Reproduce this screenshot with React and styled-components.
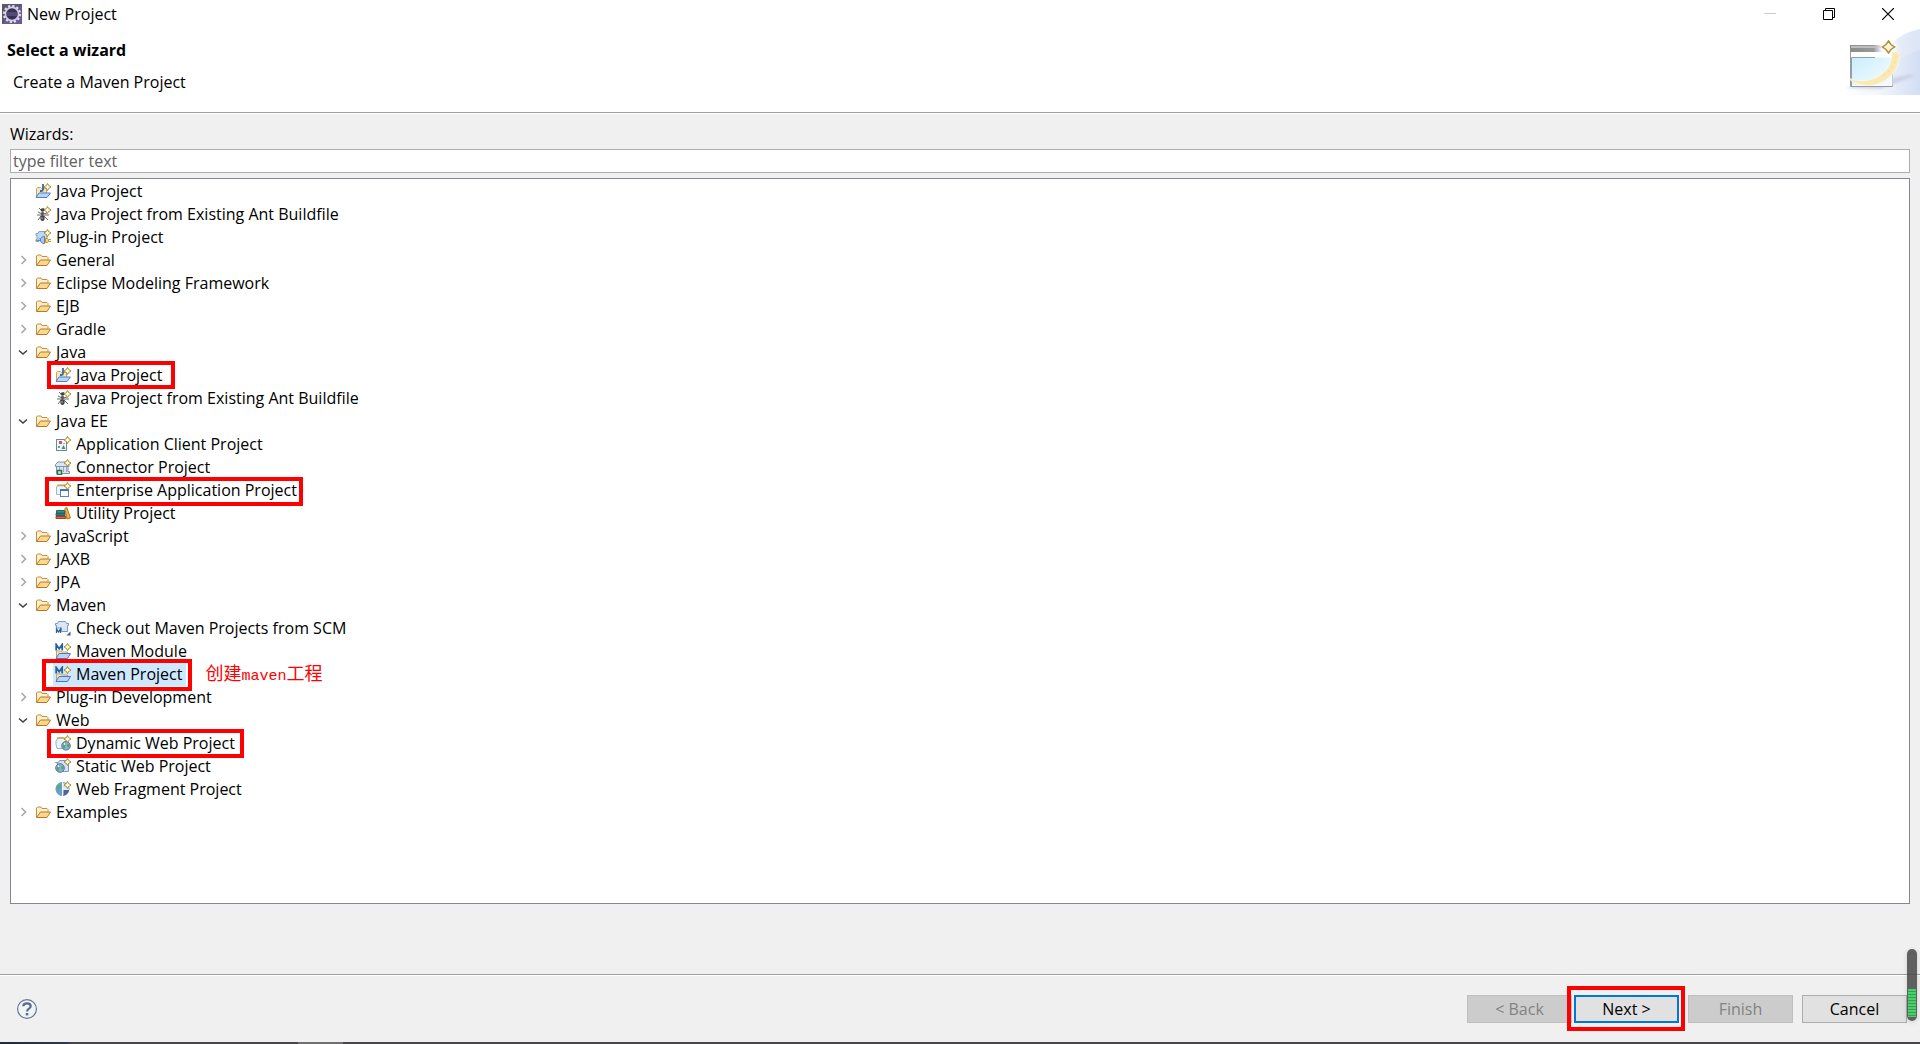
import React, { useState } from "react";
import styled, { createGlobalStyle } from "styled-components";

const GlobalStyle = createGlobalStyle`
  *, *::before, *::after { box-sizing: border-box; }
  body { margin: 0; background: #f0f0f0; }
  body, button, input {
    font-family: "Open Sans", "Noto Sans", "Noto Sans CJK SC", sans-serif;
    font-size: 16px;
    line-height: 20px;
    color: #000;
  }
  h1, p, ul { margin: 0; padding: 0; }
  button { padding: 0; }
`;

/* ---------- layout ---------- */

const Window = styled.div`
  min-height: 100vh;
  display: flex;
  flex-direction: column;
`;

const TitleBar = styled.header`
  display: flex;
  align-items: center;
  height: 28px;
  padding: 0 3px 0 2px;
  background: #fff;
`;

const WindowTitle = styled.span`
  flex: 1;
  padding-left: 5px;
`;

const CaptionButton = styled.button`
  display: grid;
  place-items: center;
  width: 59px;
  height: 28px;
  border: 0;
  background: none;
`;

const Banner = styled.section`
  display: flex;
  justify-content: space-between;
  height: 85px;
  padding-top: 1px;
  background: #fff;
  border-bottom: 1px solid #a0a0a0;
`;

const BannerText = styled.div`
  display: grid;
  gap: 12px;
  align-content: start;
  padding: 11px 7px;
`;

const Heading = styled.h1`
  font-size: 16px;
  line-height: 20px;
  font-weight: 700;
`;

const Description = styled.p`
  padding-left: 6px;
`;

const Body = styled.main`
  flex: 1;
  display: flex;
  flex-direction: column;
  border-top: 1px solid #fff;
  padding: 10px 10px 70px;
`;

const FilterLabel = styled.label`
  margin-bottom: 5px;
`;

const FilterInput = styled.input`
  width: 100%;
  height: 24px;
  padding: 0 2px;
  border: 1px solid #abadb3;
  background: #fff;
  &::placeholder { color: #606060; opacity: 1; }
`;

const TreePanel = styled.div`
  flex: 1;
  margin-top: 5px;
  padding: 1px 0;
  border: 1px solid #828790;
  background: #fff;
`;

const TreeList = styled.ul`
  list-style: none;
`;

const Row = styled.div`
  display: flex;
  align-items: center;
  height: 23px;
  padding-left: ${(p) => 3 + p.$level * 20}px;
`;

const Toggle = styled.button`
  display: grid;
  place-items: center;
  width: 18px;
  height: 23px;
  padding: 0 1px 1px 0;
  border: 0;
  background: none;
`;

const ToggleSpace = styled.span`
  width: 18px;
`;

const Item = styled.button`
  position: relative;
  display: flex;
  align-items: center;
  gap: 5px;
  height: 23px;
  margin-left: 1px;
  padding: 0 4px 2px 2px;
  border: 0;
  white-space: nowrap;
  background: ${(p) => (p.$selected ? "#cde8ff" : "none")};
`;

const Mark = styled.span`
  position: absolute;
  z-index: 1;
  inset: ${(p) => p.$inset};
  border: 4px solid #ff0000;
  pointer-events: none;
`;

const Note = styled.span`
  margin-left: 19px;
  font-family: "Noto Sans CJK SC", sans-serif;
  font-size: 18px;
  font-weight: 400;
  line-height: 23px;
  color: #ff0000;
`;

const NoteLatin = styled.span`
  font-family: "Liberation Mono", monospace;
  font-size: 15px;
`;

const Footer = styled.footer`
  display: flex;
  align-items: center;
  justify-content: space-between;
  height: 68px;
  padding: 0 13px 0 17px;
  border-top: 1px solid #a0a0a0;
  box-shadow: inset 0 1px 0 #fff;
`;

const HelpButton = styled.button`
  display: grid;
  border: 0;
  background: none;
`;

const ButtonBar = styled.div`
  display: flex;
  gap: 9px;
`;

const ButtonPair = styled.div`
  display: flex;
  gap: 2px;
`;

const PushButton = styled.button`
  position: relative;
  width: 105px;
  height: 28px;
  border: ${(p) => (p.$primary ? "2px solid #0078d7" : "1px solid #adadad")};
  background: #e1e1e1;
  &:disabled {
    border-color: #bfbfbf;
    background: #cccccc;
    color: #838383;
  }
`;

const Meter = styled.div`
  position: fixed;
  z-index: 2;
  right: 3px;
  bottom: 23px;
  width: 10px;
  height: 72px;
  padding: 40px 1px 4px;
  border-radius: 5px;
  background: rgba(64, 64, 64, 0.82);
  box-shadow: 0 1px 5px rgba(0, 0, 0, 0.14);
`;

const MeterFill = styled.div`
  height: 28px;
  background: repeating-linear-gradient(#3fd667 0 2px, #4b8f5c 2px 3px);
`;

const TaskbarEdge = styled.div`
  height: 2px;
  background: linear-gradient(
    90deg,
    #1b2b40 0, #2b3b4f 66px, #484648 72px, #484648 298px,
    #707070 298px, #707070 343px, #484648 343px
  );
`;

/* ---------- drawings ---------- */

const Svg16 = ({ children }) => (
  <svg width="16" height="16" viewBox="0 0 16 16" aria-hidden="true">{children}</svg>
);

const Sparkle = () => (
  <g>
    <path d="M12.500 .500 13.800 2.700 16 4 13.800 5.300 12.500 7.500 11.200 5.300 9 4 11.200 2.700Z" fill="#fff3b5" stroke="#a8842a" />
    <path d="M12.500 2v4M10.500 4h4" stroke="#fffbe8" />
  </g>
);

const FolderIcon = () => (
  <Svg16>
    <path d="M1.500 13V4l1-1h3.500l1 1.500h5l1 1v2" fill="#fdf0cd" stroke="#c68d3f" />
    <path d="M1.500 13.500 5.500 8h10L12 13.500Z" fill="#fcd98a" stroke="#b87729" strokeLinejoin="round" />
  </Svg16>
);

const JavaIcon = () => (
  <Svg16>
    <path d="M1.500 14V5.500l1-1h3l1 1h5v5" fill="#f8e6b9" stroke="#c0a468" />
    <path d="M1 14.500 4 10h11.500L12 14.500Z" fill="#b5d6f8" stroke="#5580c4" strokeLinejoin="round" />
    <path d="M8 1v5.500Q8 8 6.500 8H5" fill="none" stroke="#376b9d" strokeWidth="1.800" />
    <Sparkle />
  </Svg16>
);

const AntIcon = () => (
  <Svg16>
    <path d="M4 2l2 2M3 6l4 2M2 9h5M3 14l3-4M13 14l-4-4M14 9H9M8 8l4-1M9 2 8 4" fill="none" stroke="#6a6a6a" />
    <ellipse cx="7.500" cy="4" rx="2" ry="1.800" fill="#454545" />
    <ellipse cx="7.500" cy="7.500" rx="1.600" ry="1.800" fill="#5a5a5a" />
    <ellipse cx="7.500" cy="12" rx="2.200" ry="3" fill="#484848" />
    <path d="M7 11v2" stroke="#aaa" />
    <Sparkle />
  </Svg16>
);

const PluginIcon = () => (
  <Svg16>
    <path d="M1 4.500h2l1-2h7l1 2v6h-2v-1H4v3H1v-2h1v-4H1Z" fill="#bcd9f4" stroke="#86a3c7" />
    <path d="M9.500 7.500H8L5.500 9.500v3L8 14.500h1.500Z" fill="#a9c7ee" stroke="#5c82b7" />
    <path d="M1 11.500h4" stroke="#6c8cba" />
    <path d="M10.500 9.500h2l1 1v2l-1 1h-2Z" fill="#fbd75d" stroke="#c5912b" />
    <path d="M14 10.500h2M14 12.500h2" stroke="#c5912b" />
    <Sparkle />
  </Svg16>
);

const AppClientIcon = () => (
  <Svg16>
    <rect x="1.500" y="3.500" width="10" height="11" fill="#f3f8fd" stroke="#6687b4" />
    <path d="M4 5h3v3H4z" fill="#d65263" />
    <path d="m6.500 13 2-4 2 4Z" fill="#3c9b5b" />
    <path d="M3 10h2v2H3z" fill="#6ea06c" />
    <path d="M8 7h2v1H8z" fill="#e38592" />
    <Sparkle />
  </Svg16>
);

const ConnectorIcon = () => (
  <Svg16>
    <path d="M.500 5.500 3 3h8l3 2.500v2h-1v5h1.500v2H1.500v-7h-1Z" fill="#dce4f1" stroke="#8092ae" />
    <path d="M1 7.500h12" stroke="#8092ae" />
    <path d="M4.500 8v3M8.500 8v5M11.500 8v5" stroke="#9aa7bd" />
    <path d="M2.500 11.500h4v4h-4z" fill="#cfeccc" stroke="#257a49" strokeWidth="1.500" />
    <Sparkle />
  </Svg16>
);

const EnterpriseIcon = () => (
  <Svg16>
    <path d="M1.500 12.500V5L3 3h9v9.500Z" fill="#eef5fd" stroke="#9db5d8" />
    <path d="M2 3.500h8" stroke="#d4a94a" strokeWidth="1.600" />
    <rect x="5.500" y="7.500" width="8" height="7" fill="#f7fbff" stroke="#5d84bb" />
    <path d="M5 8h9" stroke="#4673ad" strokeWidth="2" />
    <Sparkle />
  </Svg16>
);

const UtilityIcon = () => (
  <Svg16>
    <path d="M1.500 5.500h8v2.500h-8z" fill="#2f9b72" stroke="#216b59" />
    <path d="M1 8.500h9v2H1z" fill="#2f7f93" stroke="#2b5c6e" />
    <path d="M1 11.500h10v2H1z" fill="#e2653c" stroke="#a5431f" />
    <path d="m9.800 3.500 2-1 3.700 10.500-3.500 1Z" fill="#efb04e" stroke="#b3741f" />
  </Svg16>
);

const MavenLetter = ({ x, y, size, weight }) => (
  <path
    d={`M${x} ${y + size}v-${size}l${size / 2} ${size * 0.7} ${size / 2}-${size * 0.7}v${size}`}
    fill="none"
    stroke="#28629e"
    strokeWidth={weight}
  />
);

const ScmIcon = () => (
  <Svg16>
    <path d="M.500 3.500h2l1-2h7l1 2h2v2h-1v6h-6V8H1.500V5.500h-1Z" fill="#d9e6f6" stroke="#8197ba" />
    <MavenLetter x={1.5} y={9} size={4} weight={1.3} />
    <path d="M15.500 11.500v4h-4Z" fill="#28629e" />
  </Svg16>
);

const MavenIcon = () => (
  <Svg16>
    <path d="M1.500 15V8h4l1 1h6v2" fill="#f8e6b9" stroke="#c0a468" />
    <path d="M1 15.500 4 10.500h11.500L12.500 15.500Z" fill="#b5d6f8" stroke="#4c78bd" strokeLinejoin="round" />
    <MavenLetter x={1.2} y={1.5} size={6} weight={1.8} />
    <Sparkle />
  </Svg16>
);

const Globe = ({ x, y }) => (
  <g transform={`translate(${x} ${y})`}>
    <circle r="4.300" fill="#7db4e4" stroke="#5275a5" />
    <path d="M-3-2q2-2 3 0 0 2-1 2 1 2-1 3-2-2-1-5ZM1-1l2-1 1 2-2 2Z" fill="#63a04f" />
    <circle cx="-1.500" cy="-1.800" r="1" fill="#e7f5ff" />
  </g>
);

const DynamicWebIcon = () => (
  <Svg16>
    <path d="M1 6 3 3h8v10.500H2Q.500 9 1 6Z" fill="#e9f1fb" stroke="#9aafd0" />
    <path d="M2 3h7" stroke="#d4a94a" strokeWidth="1.600" />
    <Globe x={11} y={10.8} />
    <Sparkle />
  </Svg16>
);

const StaticWebIcon = () => (
  <Svg16>
    <path d="M.500 4.500h3l1-2h6l1 2h2v9h-6V8h-5V5Z" fill="#d5e2f6" stroke="#7e98c2" />
    <Globe x={5} y={10} />
    <Sparkle />
  </Svg16>
);

const FragmentIcon = () => (
  <Svg16>
    <circle cx="7.500" cy="8" r="6.500" fill="#cfe6f8" stroke="#5f8fb8" />
    <path d="M7.500 1.500V14.500A6.500 6.500 0 0 1 4 2.500Z" fill="#62a0d6" />
    <path d="M3 4q3-1 3 1T4 8t1 4q-3-2-3-5Z" fill="#69a557" />
    <path d="M8.500 9H14a6.500 6.500 0 0 1-5.500 5.500Z" fill="#4b6598" />
    <path d="M7.500 1v14M7.500 8H14" stroke="#f4f8fd" />
    <Sparkle />
  </Svg16>
);

const EclipseIcon = () => (
  <svg width="20" height="20" viewBox="0 0 20 20" aria-hidden="true">
    <rect width="20" height="20" fill="#6b5a98" />
    <path d="M0 0h20L0 20Z" fill="#5c5577" />
    <circle cx="10" cy="10" r="8" fill="none" stroke="#e2e0e6" strokeWidth="2.200" strokeDasharray="2.200 1.990" />
    <circle cx="10" cy="10" r="6.600" fill="#37305a" stroke="#d4d1da" strokeWidth="1.600" />
    <path d="M4.500 9h11M4.500 11h11" stroke="#6f6799" />
  </svg>
);

const WizardBanner = () => (
  <svg width="75" height="66" viewBox="0 0 75 66" aria-hidden="true">
    <defs>
      <linearGradient id="sky" x1="0" x2="1">
        <stop offset="0" stopColor="#fff" />
        <stop offset="1" stopColor="#d0dcf3" />
      </linearGradient>
      <linearGradient id="pane" x1="0" y1="0" x2="1" y2="1">
        <stop offset="0" stopColor="#c9edfd" />
        <stop offset="1" stopColor="#f8fdff" />
      </linearGradient>
      <linearGradient id="bar" x1="0" x2="1">
        <stop offset="0" stopColor="#8b8b8b" />
        <stop offset=".55" stopColor="#999" />
        <stop offset=".8" stopColor="#fff" />
      </linearGradient>
      <filter id="glow" x="-50%" y="-50%" width="200%" height="200%">
        <feGaussianBlur stdDeviation="3" />
      </filter>
      <filter id="soften"><feGaussianBlur stdDeviation="0.800" /></filter>
    </defs>
    <path d="M0 66V60Q25 52 38 26 50 5 75 0v66Z" fill="url(#sky)" opacity=".75" />
    <path d="M20 66Q53 55 56 28L75 21v45Z" fill="url(#sky)" opacity=".8" />
    <path d="M0 59 66 45 70 47 35 60Z" fill="#c9cbe2" opacity=".75" filter="url(#soften)" />
    <path d="M5.500 16.500h42v41h-42Z" fill="#fff" stroke="#9a9a9a" />
    <path d="M5 16h43v7H5Z" fill="url(#bar)" />
    <path d="M6 18h30" stroke="#bdbdbd" strokeWidth="2" />
    <path d="M6.500 28.500h41v28h-41Z" fill="url(#pane)" />
    <path d="M6.500 57V28.500H30" fill="none" stroke="#8da3ab" />
    <circle cx="43" cy="18" r="8" fill="#fff" filter="url(#glow)" />
    <path d="M2 48Q12 59 30 56 53 49 55 26 52 20 47 24 47 41 30 49 15 55 2 48Z" fill="#f9eab5" stroke="#fff" strokeWidth=".500" />
    <path d="M51 27 49 35 44 42 37 48" fill="none" stroke="#efdba0" strokeWidth="1.500" strokeDasharray="1.500 4" />
    <path d="M43.500 12 46 15.500 49.500 18 46 20.500 43.500 24 41 20.500 37.500 18 41 15.500Z" fill="#fff8db" stroke="#b38a3c" strokeWidth="1.500" />
  </svg>
);

const HelpIcon = () => (
  <svg width="20" height="20" viewBox="0 0 20 20" aria-hidden="true">
    <circle cx="10" cy="10" r="9.400" fill="#f2f3f4" stroke="#647795" strokeWidth="1.200" />
    <path d="M6.300 7.300Q6.300 4.300 10 4.300t3.700 2.800q0 1.700-2 2.800-1.600.900-1.600 2.600" fill="none" stroke="#576b90" strokeWidth="2.200" />
    <path d="M8.800 14h2.500v2.400H8.800z" fill="#576b90" />
  </svg>
);

const Chevron = ({ open }) => (
  <svg width="10" height="10" viewBox="0 0 10 10" aria-hidden="true">
    {open ? (
      <path d="M1 3.500 5 7l4-3.500" fill="none" stroke="#404040" strokeWidth="1.500" />
    ) : (
      <path d="M3.500 1 7.500 5l-4 4" fill="none" stroke="#a6a6a6" strokeWidth="1.500" />
    )}
  </svg>
);

/* ---------- data ---------- */

const TREE = [
  { label: "Java Project", icon: JavaIcon },
  { label: "Java Project from Existing Ant Buildfile", icon: AntIcon },
  { label: "Plug-in Project", icon: PluginIcon },
  { label: "General", children: [] },
  { label: "Eclipse Modeling Framework", children: [] },
  { label: "EJB", children: [] },
  { label: "Gradle", children: [] },
  {
    label: "Java",
    children: [
      { label: "Java Project", icon: JavaIcon, mark: "-3px -9px -2px -6px" },
      { label: "Java Project from Existing Ant Buildfile", icon: AntIcon },
    ],
  },
  {
    label: "Java EE",
    children: [
      { label: "Application Client Project", icon: AppClientIcon },
      { label: "Connector Project", icon: ConnectorIcon },
      { label: "Enterprise Application Project", icon: EnterpriseIcon, mark: "-2px -2px -4px -8px" },
      { label: "Utility Project", icon: UtilityIcon },
    ],
  },
  { label: "JavaScript", children: [] },
  { label: "JAXB", children: [] },
  { label: "JPA", children: [] },
  {
    label: "Maven",
    children: [
      { label: "Check out Maven Projects from SCM", icon: ScmIcon },
      { label: "Maven Module", icon: MavenIcon },
      { label: "Maven Project", icon: MavenIcon, mark: "-4px -6px -5px -11px", selected: true, note: true },
    ],
  },
  { label: "Plug-in Development", children: [] },
  {
    label: "Web",
    children: [
      { label: "Dynamic Web Project", icon: DynamicWebIcon, mark: "-3px -5px -3px -6px" },
      { label: "Static Web Project", icon: StaticWebIcon },
      { label: "Web Fragment Project", icon: FragmentIcon },
    ],
  },
  { label: "Examples", children: [] },
];

function TreeNode({ node, level = 0 }) {
  const [open, setOpen] = useState(Boolean(node.children && node.children.length));
  const Icon = node.icon || FolderIcon;
  return (
    <li>
      <Row $level={level}>
        {node.children ? (
          <Toggle type="button" aria-label={node.label} aria-expanded={open} onClick={() => setOpen(!open)}>
            <Chevron open={open} />
          </Toggle>
        ) : (
          <ToggleSpace />
        )}
        <Item type="button" $selected={node.selected}>
          <Icon />
          {node.label}
          {node.mark && <Mark $inset={node.mark} />}
        </Item>
        {node.note && (
          <Note>创建<NoteLatin>maven</NoteLatin>工程</Note>
        )}
      </Row>
      {open && node.children.length > 0 && (
        <TreeList>
          {node.children.map((child) => (
            <TreeNode key={child.label} node={child} level={level + 1} />
          ))}
        </TreeList>
      )}
    </li>
  );
}

export default function App() {
  return (
    <>
      <GlobalStyle />
      <Window>
        <TitleBar>
          <EclipseIcon />
          <WindowTitle>New Project</WindowTitle>
          <CaptionButton type="button" aria-label="Minimize" disabled>
            <svg width="12" height="12" viewBox="0 0 12 12"><path d="M0 5.500h12" stroke="#ccc" /></svg>
          </CaptionButton>
          <CaptionButton type="button" aria-label="Restore">
            <svg width="12" height="12" viewBox="0 0 12 12">
              <path d="M.500 2.500h9v9h-9ZM2.500 2V.500h9v9H10" fill="none" stroke="#000" />
            </svg>
          </CaptionButton>
          <CaptionButton type="button" aria-label="Close">
            <svg width="12" height="12" viewBox="0 0 12 12"><path d="m0 0 12 12M12 0 0 12" stroke="#000" strokeWidth="1.200" /></svg>
          </CaptionButton>
        </TitleBar>

        <Banner>
          <BannerText>
            <Heading>Select a wizard</Heading>
            <Description>Create a Maven Project</Description>
          </BannerText>
          <WizardBanner />
        </Banner>

        <Body>
          <FilterLabel htmlFor="filter">Wizards:</FilterLabel>
          <FilterInput id="filter" type="text" placeholder="type filter text" />
          <TreePanel>
            <TreeList>
              {TREE.map((node) => (
                <TreeNode key={node.label} node={node} />
              ))}
            </TreeList>
          </TreePanel>
        </Body>

        <Footer>
          <HelpButton type="button" aria-label="Help">
            <HelpIcon />
          </HelpButton>
          <ButtonBar>
            <ButtonPair>
              <PushButton type="button" disabled>&lt; Back</PushButton>
              <PushButton type="button" $primary>
                Next &gt;
                <Mark $inset="-11px -8px -10px -9px" />
              </PushButton>
            </ButtonPair>
            <PushButton type="button" disabled>Finish</PushButton>
            <PushButton type="button">Cancel</PushButton>
          </ButtonBar>
        </Footer>
        <TaskbarEdge />
      </Window>
      <Meter>
        <MeterFill />
      </Meter>
    </>
  );
}
